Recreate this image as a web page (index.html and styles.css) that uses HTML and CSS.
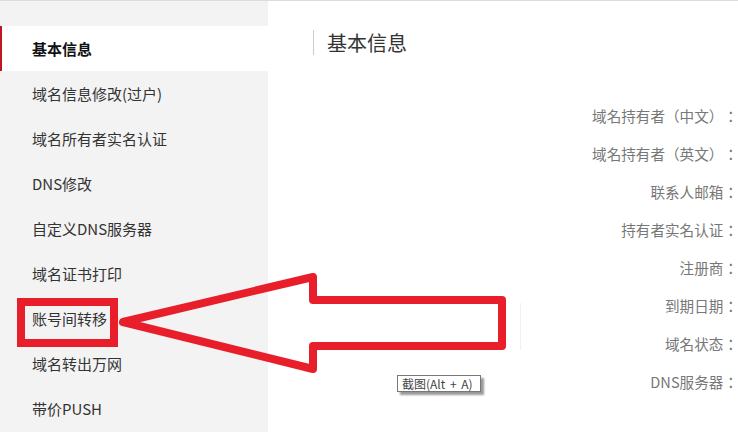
FILE: index.html
```html
<!DOCTYPE html>
<html lang="zh-CN">
<head>
  <meta charset="UTF-8">
  <meta name="viewport" content="width=device-width, initial-scale=1.0">
  <title>基本信息</title>
  <link rel="stylesheet" href="styles.css">
</head>
<body>

<div class="page">
  <ul class="side-menu">
    <li class="active">基本信息</li>
    <li>域名信息修改(过户)</li>
    <li>域名所有者实名认证</li>
    <li>DNS修改</li>
    <li>自定义DNS服务器</li>
    <li>域名证书打印</li>
    <li>账号间转移</li>
    <li>域名转出万网</li>
    <li>带价PUSH</li>
  </ul>

  <div class="main">
    <h2 class="title">基本信息</h2>
    <ul class="info-list" lang="zh-TW">
      <li>域名持有者（中文）：</li>
      <li>域名持有者（英文）：</li>
      <li>联系人邮箱：</li>
      <li>持有者实名认证：</li>
      <li>注册商：</li>
      <li>到期日期：</li>
      <li>域名状态：</li>
      <li>DNS服务器：</li>
    </ul>
  </div>
</div>

<!-- 标注 -->
<svg class="mark" width="738" height="432" viewBox="0 0 738 432">
  <line x1="520.5" y1="303" x2="520.5" y2="350" stroke="#f0f0f0" stroke-width="1"/>
  <rect x="21" y="302" width="93" height="41" fill="none" stroke="#e81f2b" stroke-width="8"/>
  <polygon points="123,322 313,277 313,300 502,300 502,346 313,346 313,369"
           fill="none" stroke="#e81f2b" stroke-width="8" stroke-linejoin="round"/>
</svg>

<div class="tip">截图(Alt + A)</div>

</body>
</html>
```

FILE: styles.css
```css
body {
  margin: 0;
  font-family: "Noto Sans CJK SC", "Noto Sans", sans-serif;
  background-color: #fff;
  color: #333;
  overflow: hidden;
  text-spacing-trim: space-all;
}
.page {
  display: flex;
  border-top: 1px solid #dcdcdc;
  height: 431px;
}
.side-menu {
  list-style: none;
  margin: 0;
  padding: 25px 0 0;
  width: 268px;
  flex-shrink: 0;
  background-color: #f3f3f3;
}
.side-menu li {
  height: 45px;
  line-height: 45px;
  padding-left: 32px;
  font-size: 15px;
  color: #333;
}
.side-menu li.active {
  background-color: #fff;
  border-left: 2px solid #c0141e;
  padding-left: 30px;
  font-weight: bold;
  color: #111;
}
.main {
  flex: 1;
  padding-left: 45px;
}
.title {
  margin: 29px 0 0;
  height: 25px;
  line-height: 25px;
  padding-left: 13px;
  border-left: 1px solid #ccc;
  font-size: 20px;
  font-weight: normal;
  color: #333;
}
.info-list {
  list-style: none;
  margin: 42px 0 0;
  padding: 0;
  text-align: right;
  font-family: "Noto Sans CJK TC", "Noto Sans CJK SC", sans-serif;
}
.info-list li {
  height: 38px;
  line-height: 38px;
  font-size: 14.6px;
  color: #777;
}
.mark {
  position: absolute;
  top: 0;
  left: 0;
}
.tip {
  position: absolute;
  left: 397px;
  top: 375px;
  width: 82px;
  height: 15px;
  line-height: 15px;
  border: 1px solid #777;
  background-color: #fff;
  box-shadow: 3px 3px 2px #999;
  font-size: 12px;
  color: #444;
  text-indent: 4px;
  word-spacing: 2px;
  white-space: nowrap;
}
```
